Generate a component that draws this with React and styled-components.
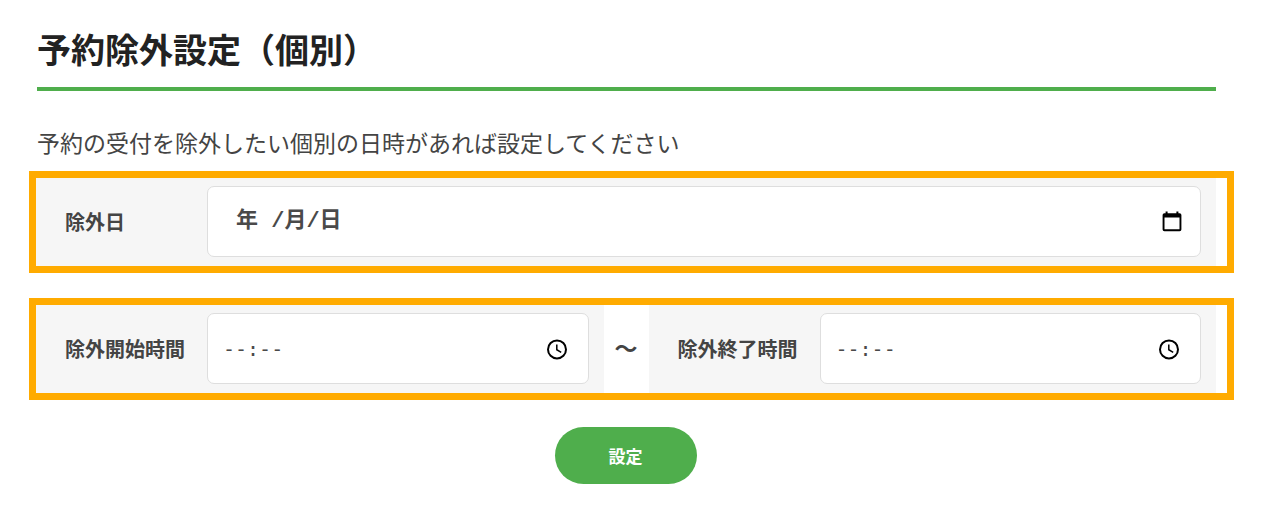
import React from "react";
import styled, { createGlobalStyle } from "styled-components";

const GlobalStyle = createGlobalStyle`
  *, *::before, *::after { box-sizing: border-box; }
  body {
    margin: 0;
    background: #fff;
    color: #444;
    font-family: "Noto Sans CJK JP", sans-serif;
  }
`;

const Page = styled.main`
  padding: 24px 30px 23px 29px;
`;

const Heading = styled.h1`
  margin: 0 18px 0 8px;
  padding-bottom: 13px;
  border-bottom: 4px solid #4fae4c;
  color: #222;
  font-size: 34px;
  line-height: 50px;
  font-weight: 700;
`;

const Lead = styled.p`
  margin: 35px 8px 13px;
  font-size: 23px;
  line-height: 32px;
`;

const Form = styled.form`
  display: flex;
  flex-direction: column;
  gap: 25px;
`;

const Highlight = styled.div`
  display: flex;
  padding-right: 11px;
  border: 7px solid #ffab00;
`;

const FieldCell = styled.div`
  flex: 1 1 0;
  min-width: 0;
  display: flex;
  align-items: center;
  padding: 8px 15px 9px 29px;
  background: #f6f6f6;
`;

const Label = styled.label`
  flex: 0 0 142px;
  font-size: 20px;
  line-height: 28px;
  font-weight: 700;
`;

const Control = styled.div`
  flex: 1;
  min-width: 0;
  height: 71px;
  display: flex;
  align-items: center;
  padding: ${(p) => (p.$wide ? "0 16px 0 28px" : "0 19px 0 15px")};
  border: 1px solid #dedede;
  border-radius: 7px;
  background: #fff;
`;

const TextInput = styled.input`
  flex: 1;
  min-width: 0;
  padding: 0;
  border: 0;
  outline: 0;
  background: transparent;
  color: #444;
  font-family: ${(p) => (p.$wide ? '"Liberation Mono"' : '"DejaVu Sans Mono"')}, "Noto Sans CJK JP", monospace;
  font-size: ${(p) => (p.$wide ? 22 : 20)}px;
  line-height: 32px;
  font-weight: ${(p) => (p.$wide ? 700 : 400)};

  &::placeholder {
    color: #4a4a4a;
    opacity: 1;
  }
`;

const PickerButton = styled.button`
  display: flex;
  padding: 0;
  border: 0;
  background: transparent;
  color: #000;
  cursor: pointer;
`;

const Separator = styled.span`
  flex: 0 0 45px;
  display: flex;
  align-items: center;
  justify-content: center;
  padding-bottom: 4px;
  font-size: 23px;
  line-height: 32px;
  font-weight: 700;
`;

const SubmitButton = styled.button`
  align-self: center;
  width: 142px;
  height: 57px;
  margin: 2px 12px 0 0;
  border: 0;
  border-radius: 29px;
  background: #4fae4c;
  color: #fff;
  font-family: inherit;
  font-size: 17px;
  line-height: 24px;
  font-weight: 700;
  cursor: pointer;
`;

const CalendarIcon = () => (
  <svg width="24" height="24" viewBox="0 0 24 24" aria-hidden="true">
    <path
      fill="currentColor"
      fillRule="evenodd"
      d="M5.6 1.6h2v1.6h8.8V1.6h2v1.6h1.2a1.8 1.8 0 0 1 1.8 1.8v14.4a1.8 1.8 0 0 1-1.8 1.8H4.4a1.8 1.8 0 0 1-1.8-1.8V5a1.8 1.8 0 0 1 1.8-1.8h1.2zM4.5 7.6v11.7h15V7.6z"
    />
  </svg>
);

const ClockIcon = () => (
  <svg width="24" height="24" viewBox="0 0 24 24" fill="none" stroke="currentColor" aria-hidden="true">
    <circle cx="12" cy="12.4" r="9" strokeWidth="2" />
    <path d="M11.8 7.4v5.3l4.4 2.6" strokeWidth="1.5" />
  </svg>
);

function Field({ id, label, placeholder, wide, pickerLabel, icon }) {
  return (
    <FieldCell>
      <Label htmlFor={id}>{label}</Label>
      <Control $wide={wide}>
        <TextInput id={id} name={id} type="text" placeholder={placeholder} $wide={wide} />
        <PickerButton type="button" aria-label={pickerLabel}>
          {icon}
        </PickerButton>
      </Control>
    </FieldCell>
  );
}

export default function App() {
  return (
    <>
      <GlobalStyle />
      <Page lang="ja">
        <Heading>予約除外設定（個別）</Heading>
        <Lead>予約の受付を除外したい個別の日時があれば設定してください</Lead>
        <Form onSubmit={(e) => e.preventDefault()}>
          <Highlight>
            <Field
              id="date"
              label="除外日"
              placeholder="年 /月/日"
              wide
              pickerLabel="日付を選択"
              icon={<CalendarIcon />}
            />
          </Highlight>
          <Highlight>
            <Field
              id="start"
              label="除外開始時間"
              placeholder="--:--"
              pickerLabel="開始時間を選択"
              icon={<ClockIcon />}
            />
            <Separator>〜</Separator>
            <Field
              id="end"
              label="除外終了時間"
              placeholder="--:--"
              pickerLabel="終了時間を選択"
              icon={<ClockIcon />}
            />
          </Highlight>
          <SubmitButton type="submit">設定</SubmitButton>
        </Form>
      </Page>
    </>
  );
}
